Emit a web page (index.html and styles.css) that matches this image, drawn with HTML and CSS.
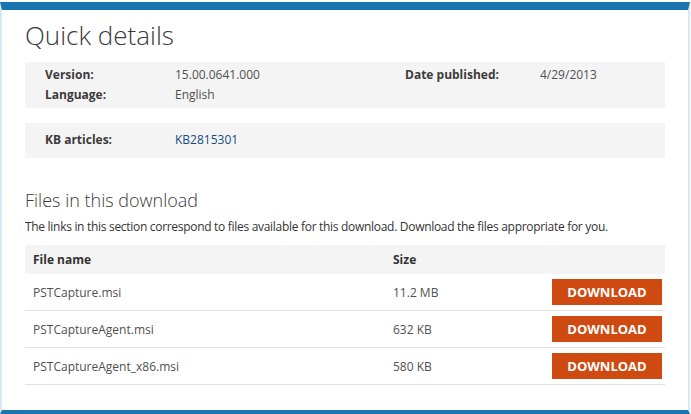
FILE: index.html
```html
<!DOCTYPE html>
<html lang="en">
<head>
  <meta charset="UTF-8">
  <title>Quick details</title>
  <link rel="stylesheet" href="styles.css">
</head>
<body>
  <div class="frame">
    <h1>Quick details</h1>
    <div class="details">
      <span class="label">Version:</span>
      <span class="value">15.00.0641.000</span>
      <span class="label">Date published:</span>
      <span class="value">4/29/2013</span>
      <span class="label">Language:</span>
      <span class="value">English</span>
    </div>
    <div class="details kb">
      <span class="label">KB articles:</span>
      <span class="value"><a href="#">KB2815301</a></span>
    </div>

    <h2>Files in this download</h2>
    <p class="intro">The links in this section correspond to files available for this download. Download the files appropriate for you.</p>
    <table class="files">
      <thead>
        <tr>
          <th>File name</th>
          <th>Size</th>
          <th></th>
        </tr>
      </thead>
      <tbody>
        <tr>
          <td>PSTCapture.msi</td>
          <td>11.2 MB</td>
          <td class="action"><a class="btn" href="#">Download</a></td>
        </tr>
        <tr>
          <td>PSTCaptureAgent.msi</td>
          <td>632 KB</td>
          <td class="action"><a class="btn" href="#">Download</a></td>
        </tr>
        <tr>
          <td>PSTCaptureAgent_x86.msi</td>
          <td>580 KB</td>
          <td class="action"><a class="btn" href="#">Download</a></td>
        </tr>
      </tbody>
    </table>
  </div>
</body>
</html>
```

FILE: styles.css
```css
html, body {
  margin: 0;
  padding: 0;
  background: #fff;
}
body {
  font-family: "Open Sans", Arial, sans-serif;
  color: #333;
  padding-top: 2px;
  padding-right: 1px;
}
.frame {
  height: 400px;
  border-top: 8px solid #1b75b1;
  border-bottom: 4px solid #1b75b1;
  border-left: 2px solid #d6e8f6;
  border-right: 2px solid #d6e8f6;
  padding: 0 23px;
}
h1 {
  margin: 0;
  padding-top: 8px;
  font-size: 26px;
  font-weight: 300;
  line-height: 34px;
  color: #3a3a3a;
  height: 44px;
}
.details {
  display: grid;
  grid-template-columns: 130px 230px 135px auto;
  background: #f4f4f4;
  padding: 3px 20px;
  font-size: 12px;
  line-height: 20px;
  color: #505050;
}
.details .label {
  font-weight: bold;
  color: #3b3b3b;
}
.details.kb {
  margin-top: 15px;
  padding: 7px 20px 8px;
}
.details a {
  color: #174a86;
  text-decoration: none;
}
h2 {
  margin: 0;
  padding-top: 30px;
  font-size: 18px;
  font-weight: 300;
  line-height: 24px;
  color: #3a3a3a;
}
.intro {
  margin: 5px 0 8px;
  font-size: 12px;
  line-height: 20px;
  letter-spacing: -0.3px;
}
.files {
  width: 100%;
  border-collapse: collapse;
  font-size: 12px;
}
.files th {
  background: #f4f4f4;
  text-align: left;
  font-weight: bold;
  height: 29px;
  padding: 0 8px;
}
.files td {
  height: 36px;
  padding: 0 8px;
  border-bottom: 1px solid #e2e2e2;
  color: #505050;
}
.files th:nth-child(1) {
  width: 344px;
}
.files td.action {
  text-align: right;
  padding-right: 3px;
}
.btn {
  display: inline-block;
  width: 110px;
  height: 26px;
  line-height: 26px;
  text-align: center;
  background: #cf4a10;
  color: #fff;
  font-weight: bold;
  font-size: 13px;
  text-transform: uppercase;
  text-decoration: none;
  vertical-align: middle;
}
```
